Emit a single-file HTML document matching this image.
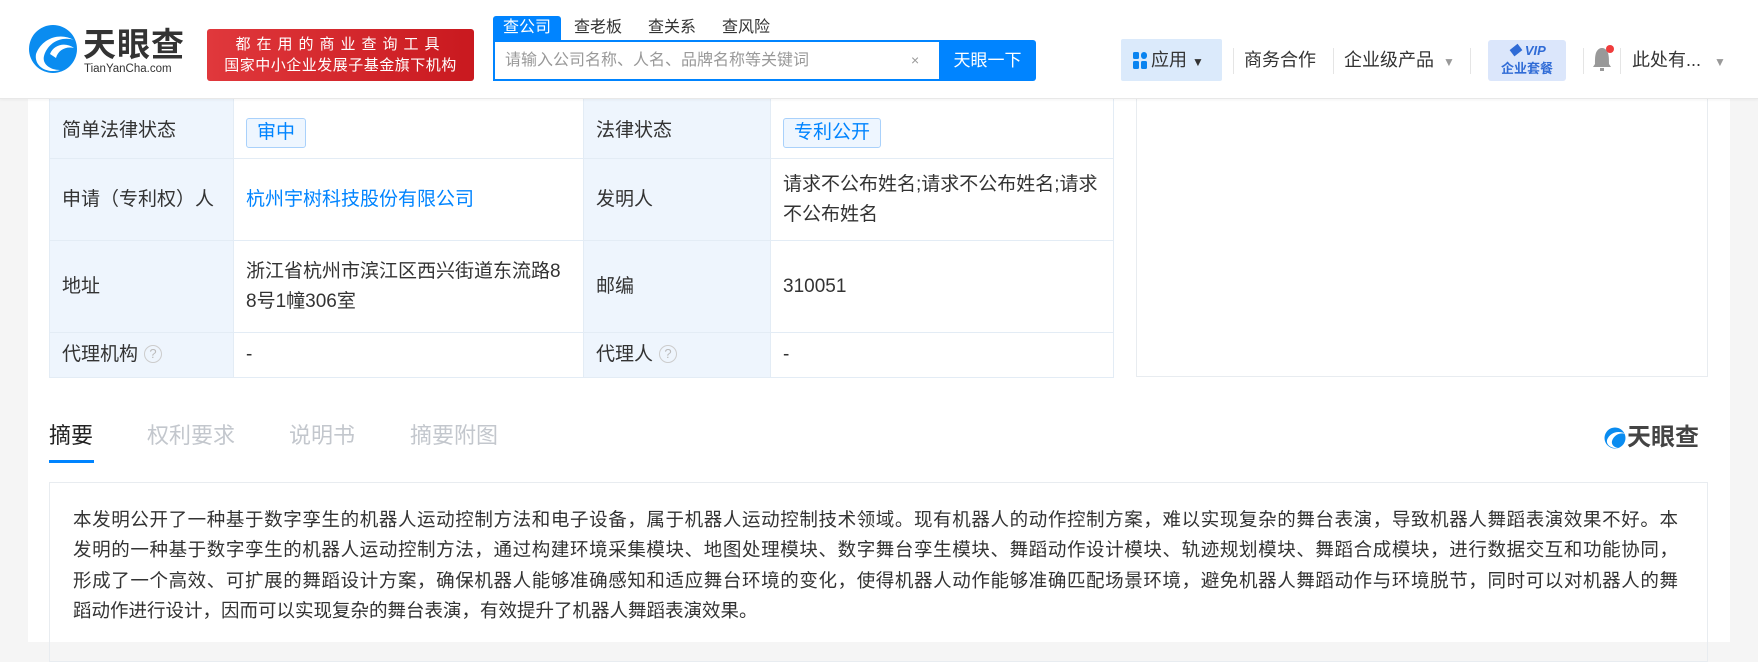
<!DOCTYPE html>
<html><head><meta charset="utf-8"><style>
*{margin:0;padding:0;box-sizing:border-box}
body{width:1758px;height:642px;overflow:hidden;background:#f5f5f5;font-family:"Liberation Sans","Noto Sans CJK SC",sans-serif;color:#333;position:relative}
.abs{position:absolute}
#main{left:28px;top:0;width:1702px;height:642px;background:#fff}
#hdr{left:0;top:0;width:1758px;height:99px;background:#fff;border-bottom:1px solid #e8e8e8;box-shadow:0 1px 3px rgba(0,0,0,.05)}
.red{left:207px;top:29px;width:267px;height:52px;background:linear-gradient(90deg,#e0383c,#c9191f);border-radius:3px;color:#fff;text-align:center;font-size:15px;line-height:21px;padding-top:5px}
.tab{top:16px;height:24px;font-size:16px;line-height:24px;color:#333;text-align:center}
.search{left:493px;top:40px;width:446px;height:41px;border:2px solid #0084ff;border-right:none;background:#fff;font-size:16px;color:#999;line-height:37px;padding-left:10px}
.btn{left:939px;top:40px;width:97px;height:41px;background:#0084ff;color:#fff;font-size:17px;line-height:41px;text-align:center;border-radius:0 3px 3px 0}
.nav{top:42px;font-size:18px;line-height:36px;color:#333}
.sep{top:48px;width:1px;height:26px;background:#e5e5e5}
table{border-collapse:collapse;position:absolute;left:49px;top:79px;font-size:19px;table-layout:fixed}
td{border:1px solid #e3ecf5;padding:0;vertical-align:middle;line-height:30px}
td.l{background:#eef5fd;padding-left:12px}
td.v{padding-left:12px;padding-right:8px}
.badge{display:inline-block;border:1px solid #a9d1fb;background:#eef6ff;color:#0084ff;border-radius:3px;padding:0 10px;line-height:28px;font-size:19px}
.q{display:inline-block;width:18px;height:18px;border:1.5px solid #ccc;border-radius:50%;color:#bbb;font-size:13px;line-height:15px;text-align:center;vertical-align:2px;margin-left:6px}
.tabs{top:420px;font-size:22px;line-height:32px;color:#c3c7cd}
.txt{left:73px;width:1605px;font-size:18.5px;line-height:30px;color:#333;white-space:nowrap;text-align:justify;text-align-last:justify}
</style></head><body>
<div id="main" class="abs"></div>
<table>
<colgroup><col style="width:184px"><col style="width:350px"><col style="width:187px"><col style="width:343px"></colgroup>
<tr style="height:79px"><td class="l" style="vertical-align:bottom;padding-bottom:12px">简单法律状态</td><td class="v" style="vertical-align:bottom;padding-bottom:10px"><span class="badge">审中</span></td><td class="l" style="vertical-align:bottom;padding-bottom:12px">法律状态</td><td class="v" style="vertical-align:bottom;padding-bottom:10px"><span class="badge">专利公开</span></td></tr>
<tr style="height:82px"><td class="l">申请（专利权）人</td><td class="v" style="color:#0084ff">杭州宇树科技股份有限公司</td><td class="l">发明人</td><td class="v" style="word-break:break-all">请求不公布姓名;请求不公布姓名;请求<br>不公布姓名</td></tr>
<tr style="height:92px"><td class="l">地址</td><td class="v">浙江省杭州市滨江区西兴街道东流路8<br>8号1幢306室</td><td class="l">邮编</td><td class="v">310051</td></tr>
<tr style="height:45px"><td class="l">代理机构<span class="q">?</span></td><td class="v">-</td><td class="l">代理人<span class="q">?</span></td><td class="v">-</td></tr>
</table>
<div class="abs" style="left:1136px;top:90px;width:572px;height:287px;border:1px solid #e8ecf0;border-top:none"></div>

<div id="hdr" class="abs"></div>
<svg class="abs" style="left:28px;top:24px" width="50" height="50" viewBox="0 0 50 50"><circle cx="25" cy="25" r="24" fill="#0a8cf0"/><path d="M8 30 C14 14 32 8 46 16 C34 12 20 18 16 32 C14 40 22 46 32 46 C18 50 6 42 8 30Z" fill="#fff"/><path d="M22 30 C26 20 38 18 46 24 C38 22 30 26 28 34 Z" fill="#fff"/></svg>
<div class="abs" style="left:83px;top:26px;font-size:33px;font-weight:bold;color:#333;letter-spacing:1px;line-height:38px">天眼查</div>
<div class="abs" style="left:84px;top:62px;font-size:11.5px;color:#333;line-height:14px">TianYanCha.com</div>
<div class="abs red"><div style="letter-spacing:6px">都在用的商业查询工具</div><div style="letter-spacing:.5px">国家中小企业发展子基金旗下机构</div></div>
<div class="abs tab" style="left:493px;width:68px;background:#0084ff;color:#fff;border-radius:3px 3px 0 0">查公司</div>
<div class="abs tab" style="left:568px;width:60px">查老板</div>
<div class="abs tab" style="left:642px;width:60px">查关系</div>
<div class="abs tab" style="left:716px;width:60px">查风险</div>
<div class="abs search">请输入公司名称、人名、品牌名称等关键词<span style="position:absolute;left:416px;top:0;color:#999;font-size:14px">×</span></div>
<div class="abs btn">天眼一下</div>
<div class="abs" style="left:1121px;top:39px;width:101px;height:42px;background:#dbeafb;border-radius:2px"></div>
<svg class="abs" style="left:1133px;top:52px" width="16" height="18"><rect x="0" y="0" width="6" height="7" rx="1.5" fill="#0a84f0"/><rect x="8" y="0" width="6" height="7" rx="3" fill="#0a84f0"/><rect x="0" y="9" width="6" height="8" rx="1.5" fill="#0a84f0"/><rect x="8" y="9" width="6" height="8" rx="1.5" fill="#0a84f0"/></svg>
<div class="abs nav" style="left:1151px">应用 <span style="font-size:12px">▼</span></div>
<div class="abs sep" style="left:1233px"></div>
<div class="abs nav" style="left:1244px">商务合作</div>
<div class="abs sep" style="left:1333px"></div>
<div class="abs nav" style="left:1344px">企业级产品 <span style="font-size:12px;color:#999;margin-left:4px">▼</span></div>
<div class="abs sep" style="left:1470px"></div>
<div class="abs" style="left:1488px;top:40px;width:78px;height:41px;background:#dbe6fb;border-radius:3px;color:#2f6bd6;text-align:center;font-weight:bold"><div style="font-size:13px;line-height:18px;margin-top:2px;font-style:italic">◆ VIP</div><div style="font-size:13px;line-height:18px">企业套餐</div></div>
<div class="abs sep" style="left:1583px"></div>
<svg class="abs" style="left:1591px;top:44px" width="24" height="30" viewBox="0 0 24 30"><path d="M10 4 C4 6 4 12 4 20 L2 23 L20 23 L18 20 C18 12 18 6 12 4Z" fill="#999"/><rect x="9" y="24" width="4" height="3" fill="#999"/><circle cx="19" cy="5" r="4" fill="#f03c3c"/></svg>
<div class="abs sep" style="left:1620px"></div>
<div class="abs nav" style="left:1632px">此处有... <span style="font-size:12px;color:#999;margin-left:8px">▼</span></div>

<div class="abs tabs" style="left:49px;color:#222">摘要</div>
<div class="abs" style="left:49px;top:460px;width:45px;height:3px;background:#0084ff"></div>
<div class="abs tabs" style="left:147px">权利要求</div>
<div class="abs tabs" style="left:289px">说明书</div>
<div class="abs tabs" style="left:410px">摘要附图</div>
<svg class="abs" style="left:1604px;top:427px" width="24" height="22" viewBox="0 0 24 22"><circle cx="11" cy="11" r="10.5" fill="#0a8cf0"/><path d="M3 13 C6 5 15 3 22 7 C16 5 10 8 8 14 C7 18 11 21 15 21 C9 22 2 19 3 13Z" fill="#fff"/></svg>
<div class="abs" style="left:1627px;top:423px;font-size:24px;font-weight:bold;color:#444;line-height:30px">天眼查</div>

<div class="abs" style="left:49px;top:482px;width:1659px;height:180px;border:1px solid #e8ecf0"></div>
<div class="abs txt" style="top:505px">本发明公开了一种基于数字孪生的机器人运动控制方法和电子设备，属于机器人运动控制技术领域。现有机器人的动作控制方案，难以实现复杂的舞台表演，导致机器人舞蹈表演效果不好。本</div>
<div class="abs txt" style="top:535px">发明的一种基于数字孪生的机器人运动控制方法，通过构建环境采集模块、地图处理模块、数字舞台孪生模块、舞蹈动作设计模块、轨迹规划模块、舞蹈合成模块，进行数据交互和功能协同，</div>
<div class="abs txt" style="top:566px">形成了一个高效、可扩展的舞蹈设计方案，确保机器人能够准确感知和适应舞台环境的变化，使得机器人动作能够准确匹配场景环境，避免机器人舞蹈动作与环境脱节，同时可以对机器人的舞</div>
<div class="abs txt" style="top:596px;text-align-last:left;width:auto">蹈动作进行设计，因而可以实现复杂的舞台表演，有效提升了机器人舞蹈表演效果。</div>
</body></html>
